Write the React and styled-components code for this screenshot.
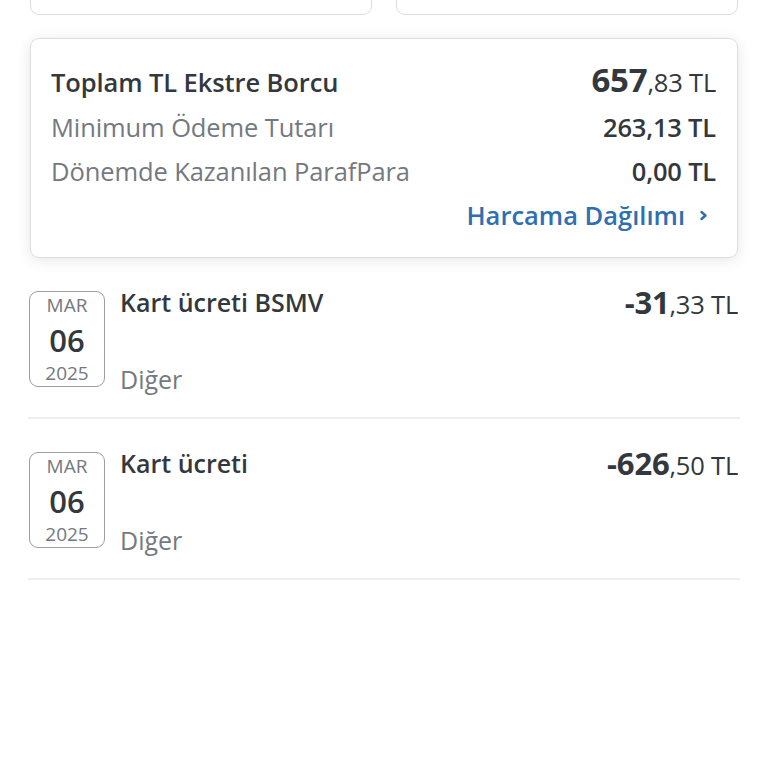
import React from "react";
import styled, { createGlobalStyle } from "styled-components";

const Global = createGlobalStyle`
  html, body {
    margin: 0;
    padding: 0;
    background: #fff;
  }
  body {
    font-family: "Open Sans", "Noto Sans", sans-serif;
    color: #33383d;
  }
`;

const transactions = [
  { month: "MAR", day: "06", year: "2025", title: "Kart ücreti BSMV", category: "Diğer", whole: "-31", cents: ",33 TL" },
  { month: "MAR", day: "06", year: "2025", title: "Kart ücreti", category: "Diğer", whole: "-626", cents: ",50 TL" },
];

function App() {
  return (
    <>
      <Global />
      <Page>
        <TopCards>
          <SmallCard />
          <SmallCard />
        </TopCards>

        <Summary>
          <SumRow lh={38}>
            <SumLabel strong>Toplam TL Ekstre Borcu</SumLabel>
            <SumValue>
              <Big>657</Big>,83 TL
            </SumValue>
          </SumRow>
          <SumRow>
            <SumLabel>Minimum Ödeme Tutarı</SumLabel>
            <SumValue bold>263,13 TL</SumValue>
          </SumRow>
          <SumRow>
            <SumLabel>Dönemde Kazanılan ParafPara</SumLabel>
            <SumValue bold>0,00 TL</SumValue>
          </SumRow>
          <LinkRow>
            <Link>
              Harcama Dağılımı
              <svg width="9" height="13" viewBox="0 0 9 13">
                <path d="M2.5 3 L6.5 6.5 L2.5 10" fill="none" stroke="#2f6fb1" strokeWidth="2.4" strokeLinecap="round" strokeLinejoin="round" />
              </svg>
            </Link>
          </LinkRow>
        </Summary>

        <List>
          {transactions.map((t, i) => (
            <Item key={i}>
              <DateBox>
                <Month>{t.month}</Month>
                <Day>{t.day}</Day>
                <Year>{t.year}</Year>
              </DateBox>
              <Info>
                <Title>{t.title}</Title>
                <Category>{t.category}</Category>
              </Info>
              <Amount>
                <AmountWhole>{t.whole}</AmountWhole>
                {t.cents}
              </Amount>
            </Item>
          ))}
        </List>
      </Page>
    </>
  );
}

const Page = styled.div`
  width: 768px;
  height: 768px;
  overflow: hidden;
  padding: 0 30px;
  box-sizing: border-box;
`;

const TopCards = styled.div`
  display: grid;
  grid-template-columns: 1fr 1fr;
  gap: 24px;
  margin-top: -67px;
`;

const SmallCard = styled.div`
  height: 80px;
  border: 1px solid #dcdde0;
  border-radius: 9px;
  background: #fff;
`;

const Summary = styled.div`
  margin-top: 23px;
  border: 1px solid #dcdde0;
  border-radius: 9px;
  background: #fff;
  box-shadow: 0 2px 14px rgba(0, 0, 0, 0.1);
  padding: 22px 21px 20px 20px;
`;

const SumRow = styled.div`
  display: flex;
  justify-content: space-between;
  align-items: baseline;
  height: 44px;
  line-height: ${(p) => p.lh || 44}px;
  white-space: nowrap;
`;

const SumLabel = styled.span`
  font-size: 25.5px;
  letter-spacing: -0.1px;
  font-weight: ${(p) => (p.strong ? 600 : 400)};
  color: ${(p) => (p.strong ? "#33383d" : "#74797f")};
`;

const SumValue = styled.span`
  font-size: 25.5px;
  letter-spacing: -0.2px;
  font-weight: ${(p) => (p.bold ? 600 : 500)};
  color: #33383d;
`;

const Big = styled.span`
  font-size: 33px;
  font-weight: 700;
`;

const LinkRow = styled.div`
  display: flex;
  justify-content: flex-end;
  height: 44px;
  align-items: center;
`;

const Link = styled.a`
  display: flex;
  align-items: center;
  gap: 14px;
  font-size: 25.5px;
  font-weight: 600;
  color: #2f6fb1;
  padding-right: 8px;
  white-space: nowrap;
`;

const List = styled.div`
  margin: 0 -2px;
`;

const Item = styled.div`
  display: flex;
  align-items: flex-start;
  padding: 33px 0 30px;
  border-bottom: 2px solid #eceef0;
`;

const DateBox = styled.div`
  width: 76px;
  height: 96px;
  flex-shrink: 0;
  box-sizing: border-box;
  margin-left: 1px;
  padding-top: 3px;
  border: 1px solid #9a9ea3;
  border-radius: 9px;
  display: flex;
  flex-direction: column;
  align-items: center;
`;

const Month = styled.span`
  font-size: 19px;
  line-height: 20px;
  height: 20px;
  color: #74797f;
`;

const Day = styled.span`
  font-size: 31px;
  line-height: 34px;
  height: 34px;
  font-weight: 600;
  color: #33383d;
  margin-top: 8px;
`;

const Year = styled.span`
  font-size: 19px;
  line-height: 20px;
  height: 20px;
  color: #74797f;
  margin-top: 6px;
`;

const Info = styled.div`
  flex: 1;
  margin-left: 15px;
  display: flex;
  flex-direction: column;
  justify-content: space-between;
  height: 100px;
  margin-top: -11px;
`;

const Title = styled.div`
  font-size: 25px;
  font-weight: 600;
  line-height: 44px;
`;

const Category = styled.div`
  font-size: 25px;
  color: #74797f;
  line-height: 44px;
  margin-bottom: -21px;
`;

const Amount = styled.div`
  font-size: 25.5px;
  font-weight: 500;
  letter-spacing: -0.2px;
  line-height: 44px;
  margin-top: -11px;
  margin-right: 2px;
  white-space: nowrap;
`;

const AmountWhole = styled.span`
  font-size: 31px;
  font-weight: 700;
`;

export default App;
